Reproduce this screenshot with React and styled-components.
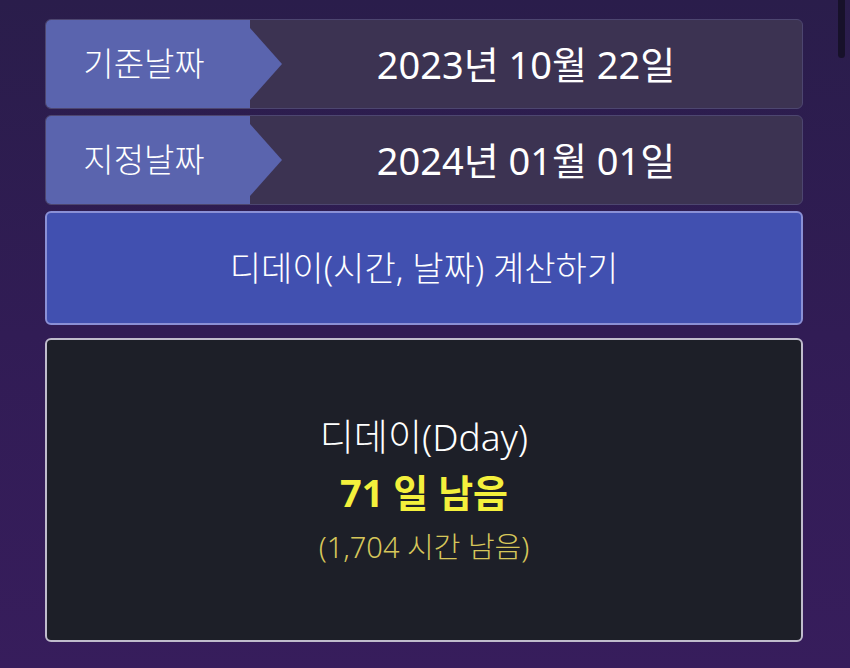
import React from "react";
import styled, { createGlobalStyle } from "styled-components";

const GlobalStyle = createGlobalStyle`
  html, body {
    margin: 0;
    padding: 0;
  }
  body {
    font-family: "Noto Sans", "Noto Sans CJK KR", sans-serif;
    background: linear-gradient(180deg, #2a1d4b 0%, #311c55 50%, #371d5c 100%);
    min-height: 668px;
  }
`;

const Page = styled.div`
  position: relative;
  box-sizing: border-box;
  width: 850px;
  height: 668px;
  padding: 19px 47px 0 45px;
  display: flex;
  flex-direction: column;
  gap: 6px;
`;

const Scrollbar = styled.div`
  position: absolute;
  top: 0;
  right: 5px;
  width: 7px;
  height: 58px;
  border-radius: 0 0 4px 4px;
  background: #17112a;
`;

const DateRow = styled.div`
  box-sizing: border-box;
  height: 90px;
  display: flex;
  border: 1px solid #4d4670;
  border-radius: 6px;
  overflow: hidden;
  background: #3c3352;
`;

const Label = styled.div`
  position: relative;
  width: 204px;
  flex-shrink: 0;
  display: flex;
  align-items: center;
  justify-content: center;
  padding: 0 8px 4px 0;
  box-sizing: border-box;
  background: #5a64ae;
  color: #ffffff;
  font-size: 33px;
  font-weight: 300;

  &::after {
    content: "";
    position: absolute;
    top: 50%;
    left: 100%;
    transform: translateY(-50%);
    border-top: 36px solid transparent;
    border-bottom: 36px solid transparent;
    border-left: 32px solid #5a64ae;
  }
`;

const Value = styled.div`
  flex: 1;
  display: flex;
  align-items: center;
  justify-content: center;
  color: #ffffff;
  font-size: 38px;
  padding-bottom: 4px;
`;

const CalcButton = styled.button`
  box-sizing: border-box;
  height: 114px;
  border: 2px solid #8a90d6;
  border-radius: 6px;
  background: #4150b0;
  color: #ffffff;
  font-family: inherit;
  font-size: 34px;
  font-weight: 300;
  padding-bottom: 4px;
  cursor: pointer;
`;

const ResultBox = styled.div`
  box-sizing: border-box;
  height: 304px;
  margin-top: 7px;
  border: 2px solid #c0bccc;
  border-radius: 6px;
  background: #1d1f28;
  display: flex;
  flex-direction: column;
  align-items: center;
  justify-content: center;
`;

const Line = styled.div`
  height: 55px;
  display: flex;
  align-items: center;
  color: ${(p) => p.$color};
  font-size: ${(p) => p.$size}px;
  font-weight: ${(p) => (p.$bold ? 700 : 300)};
`;

const dates = [
  { label: "기준날짜", value: "2023년 10월 22일" },
  { label: "지정날짜", value: "2024년 01월 01일" },
];

export default function App() {
  return (
    <>
      <GlobalStyle />
      <Page>
        <Scrollbar />
        {dates.map((d) => (
          <DateRow key={d.label}>
            <Label>{d.label}</Label>
            <Value>{d.value}</Value>
          </DateRow>
        ))}
        <CalcButton>디데이(시간, 날짜) 계산하기</CalcButton>
        <ResultBox>
          <Line $color="#ffffff" $size={37}>디데이(Dday)</Line>
          <Line $color="#f4f03c" $size={38} $bold>71 일 남음</Line>
          <Line $color="#d6c65a" $size={29}>(1,704 시간 남음)</Line>
        </ResultBox>
      </Page>
    </>
  );
}
